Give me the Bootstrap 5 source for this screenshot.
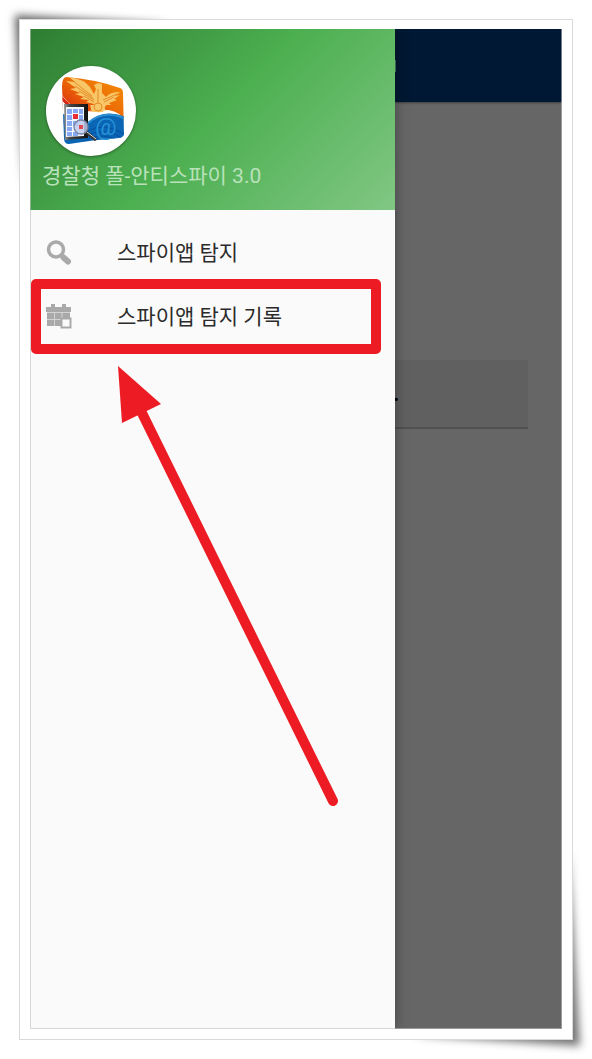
<!DOCTYPE html>
<html lang="ko">
<head>
<meta charset="utf-8">
<meta name="viewport" content="width=device-width, initial-scale=1">
<title>경찰청 폴-안티스파이 3.0</title>
<link rel="stylesheet" href="https://cdn.jsdelivr.net/npm/bootstrap@5.3.0/dist/css/bootstrap.min.css">
<style>
body{font-family:Roboto,"Noto Sans CJK KR",sans-serif;background:#fff}
.page{min-height:100vh;padding:19px}
.photo{border:1px solid #d9d9d9;padding:9px 10px 10px;background:#fff}
.corner{position:absolute;width:340px;height:340px;pointer-events:none}
.corner-tl{top:0;left:0}
.corner-br{bottom:0;right:0}
.photo{z-index:1}
.screen::after{content:"";position:absolute;inset:0;z-index:3;border:1px solid rgba(190,190,190,.6);border-top:0;pointer-events:none}
.drawer{flex:0 0 365px;background:#fafafa;box-shadow:0 0 12px rgba(0,0,0,.35);z-index:2}
.drawer-head{height:181px;padding:37px 12px 0;background:linear-gradient(135deg,#2e7d32 0%,#4caf50 50%,#81c784 100%)}
.avatar{width:90px;height:90px;margin-left:4px;border-radius:50%;background:#fff;box-shadow:0 1px 3px rgba(0,0,0,.4)}
.app-name{font-size:21px;line-height:32px;color:#b9e2ba;margin-top:4px}
.menu-list{padding-top:10px}
.menu-row{height:64px;padding:2px 0 0 15px;font-size:21px;line-height:32px;color:#2b2b2b;text-decoration:none}
.menu-row svg{width:28px;height:28px;margin-right:44px;flex:none}
.marked::after{content:"";position:absolute;inset:-5px 14px -6px 1px;border:10px solid #ed1c24;border-radius:5px}
.pointer{top:332px;left:82px;width:232px;height:450px}
.app{background:#666}
.app-bar{height:73px;background:#001833;box-shadow:0 1px 2px rgba(0,0,0,.4)}
.title-end{width:1px;height:12px;background:#4a7866}
.scan-btn{height:69px;margin:258px 34px 0 0;border:0;border-bottom:2px solid #505050;background:#606060;color:#000;font-size:22px;font-weight:700;padding:0;text-indent:-2px}
</style>
<script src="https://cdn.jsdelivr.net/npm/bootstrap@5.3.0/dist/js/bootstrap.bundle.min.js"></script>
</head>
<body>
<div class="page position-relative d-flex overflow-hidden">
  <svg class="corner corner-tl" viewBox="0 0 340 340" aria-hidden="true">
    <defs><filter id="soft" x="-20%" y="-20%" width="140%" height="140%"><feGaussianBlur stdDeviation="4"/></filter></defs>
    <path d="M15 15 L170 24 L30 40 L24 190Z" fill="#000" fill-opacity=".62" filter="url(#soft)"/>
  </svg>
  <svg class="corner corner-br" viewBox="0 0 340 340" aria-hidden="true">
    <path d="M328 327 L160 316 L310 300 L317 130Z" fill="#000" fill-opacity=".55" filter="url(#soft)"/>
  </svg>
  <main class="photo position-relative flex-grow-1 d-flex">
    <div class="screen position-relative d-flex flex-grow-1 overflow-hidden">
      <nav class="drawer position-relative" aria-label="메뉴">
        <header class="drawer-head">
          <div class="avatar">
            <svg width="90" height="90" viewBox="0 0 90 90" aria-hidden="true">
              <defs>
                <linearGradient id="fire" x1="1" y1="0" x2="0" y2="1"><stop offset="0" stop-color="#f59a08"/><stop offset=".5" stop-color="#ec6b05"/><stop offset=".85" stop-color="#d92413"/></linearGradient>
                <linearGradient id="bezel" x2="1"><stop stop-color="#999"/><stop offset=".25" stop-color="#444"/><stop offset="1" stop-color="#111"/></linearGradient>
                <clipPath id="shield"><path d="M20 11 Q48 13 74 22 Q77 23 77 27 L78 68 Q78 71 73 72 Q46 74 23 78 Q18 78 18 72 L16 20 Q16 12 20 11Z"/></clipPath>
              </defs>
              <g clip-path="url(#shield)">
                <path d="M10 5H85V58H10Z" fill="url(#fire)"/>
                <path d="M14 26 Q28 48 48 45 Q68 40 80 54 V82 H14Z" fill="#fff"/>
                <path d="M15 31 Q22 40 30 44" fill="none" stroke="#d92413" stroke-width="3"/>
                <path d="M14 47 L42 56 Q58 42 80 51 V82 H14Z" fill="#0a66b4"/>
                <path d="M42 57 Q58 43 80 53" fill="none" stroke="#2c8fd2" stroke-width="2"/>
                <path d="M40 66Q58 55 78 68M40 70Q58 60 78 73M38 75Q58 64 76 77" fill="none" stroke="#0750a0"/>
              </g>
              <path d="M48 38 L40 36 L43 34 L34 33 L38 31 L29 28 L34 27 L24 23 L30 22 L20 15 L29 16 L23 11 Q38 13 44 21 L48 28 L50 23 L48 19 L52 17 L56 18 L56 27 L60 31 Q64 26 74 26 L69 30 L74 29 L68 33 L71 34 L63 37 L65 39 L57 39 L60 45 L55 43 L53 47 L49 42 L44 45Z" fill="#f9c667"/>
              <path d="M44 39h16l-3 7H46Z" fill="#f9c667"/>
              <g fill="none" stroke="#dd7d18" stroke-width=".8"><path d="M27 15L46 30M29 20L47 32M33 25L48 34M38 30L48 36M71 28L57 34M68 31L58 36M52 23v14"/><circle cx="52" cy="41" r="4"/></g>
              <text x="49" y="69" font-family="Roboto,sans-serif" font-size="24" fill="#2590d6">@</text>
              <path d="M18 38H42V72L19 74Z" fill="url(#bezel)"/>
              <path d="M20 41H38V70L20 71Z" fill="#f4f6ff"/>
              <path d="M21 43h5v5h-5zM27 43h5v4h-5zM33 43h4v5h-4zM21 49h5v5h-5zM33 49h4v5h-4zM21 55h5v5h-5zM27 55h5v5h-5zM21 61h5v4h-5zM21 66h5v4h-5zM27 66h5v4h-5z" fill="#87a8f3"/>
              <path d="M27 48h5v5h-5z" fill="#e92c35"/>
              <path d="M40 66L50 74" stroke="#333" stroke-width="3"/><path d="M41 66L50 73" stroke="#ddd"/>
              <circle cx="35" cy="61" r="7" fill="#c0cbed" fill-opacity=".85" stroke="#7584a3" stroke-width="1.3"/>
              <path d="M33 59h4v4h-4z" fill="#e0484f"/>
            </svg>
          </div>
          <div class="app-name">경찰청 폴-안티스파이 3.0</div>
        </header>
        <div class="menu-list">
          <a href="#scan" class="menu-row d-flex align-items-center">
            <svg viewBox="0 0 28 28" aria-hidden="true"><circle cx="11" cy="10.5" r="7.500" fill="none" stroke="#a9a9a9" stroke-width="3.5"/><path d="M16 16l3 3" stroke="#a9a9a9" stroke-width="3"/><path d="M18.5 18.5l4.500 4" stroke="#a9a9a9" stroke-width="6" stroke-linecap="round"/></svg>
            <span>스파이앱 탐지</span>
          </a>
          <a href="#history" class="menu-row marked position-relative d-flex align-items-center">
            <svg viewBox="0 0 28 28" aria-hidden="true"><path d="M1 4H26V9H1ZM6 1h4v3H6zM17 1h4v3h-4z" fill="#a9a9a9"/><path d="M2 8H25V23H2Z" fill="#a9a9a9"/><path d="M2 9.5H25M2 16.500H17M9.500 10V23M17 10V23" stroke="#d3d3d3"/><path d="M16.500 15.500h9v9h-9z" fill="#fafafa" stroke="#a9a9a9" stroke-width="2"/></svg>
            <span>스파이앱 탐지 기록</span>
          </a>
        </div>
        <svg class="pointer position-absolute" viewBox="0 0 232 450" aria-hidden="true"><path d="M6 5L49 43L10 62Z" fill="#ed1c24"/><path d="M29 50L221 440" stroke="#ed1c24" stroke-width="10" stroke-linecap="round"/></svg>
      </nav>
      <section class="app flex-grow-1 d-flex flex-column">
        <div class="app-bar d-flex align-items-center"><span class="title-end"></span></div>
        <button type="button" class="scan-btn text-start">.</button>
      </section>
    </div>
  </main>
</div>
</body>
</html>
